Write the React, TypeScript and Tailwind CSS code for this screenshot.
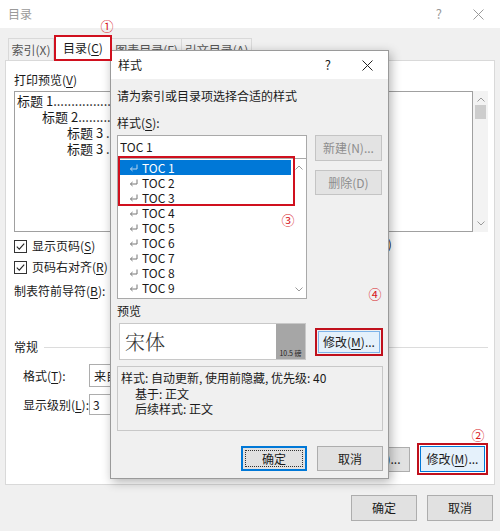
import React from "react";

function Check() {
  return (
    <span className="flex h-[13px] w-[13px] shrink-0 items-center justify-center border border-[#333] bg-white">
      <svg width="11" height="11" viewBox="0 0 11 11">
        <path d="M1.8 5.6 L4.3 8.1 L9.2 2.6" fill="none" stroke="#222" strokeWidth="1.1" />
      </svg>
    </span>
  );
}

function CloseIcon({ color }: { color: string }) {
  return (
    <svg width="11" height="11" viewBox="0 0 11 11">
      <path d="M0.5 0.5 L10.5 10.5 M10.5 0.5 L0.5 10.5" stroke={color} strokeWidth="1" />
    </svg>
  );
}

function Chevron({ up }: { up?: boolean }) {
  return (
    <svg width="8" height="5" viewBox="0 0 8 5">
      <path
        d={up ? "M0.5 4.5 L4 1 L7.5 4.5" : "M0.5 0.5 L4 4 L7.5 0.5"}
        fill="none"
        stroke="#9a9a9a"
        strokeWidth="1"
      />
    </svg>
  );
}

function ReturnMark({ color }: { color: string }) {
  return (
    <svg width="9" height="8" viewBox="0 0 9 8">
      <path d="M8 0.5 V5 H1.5" fill="none" stroke={color} strokeWidth="1" />
      <path d="M3.6 3 L1.4 5 L3.6 7" fill="none" stroke={color} strokeWidth="1" />
    </svg>
  );
}

function U({ k }: { k: string }) {
  return <span className="underline underline-offset-2">{k}</span>;
}

function Mark({ n, className }: { n: string; className: string }) {
  return (
    <span
      className={`absolute flex h-[14px] w-[14px] items-center justify-center text-[13px] leading-[14px] text-[#d7191f] ${className}`}
    >
      {n}
    </span>
  );
}

const tocItems = ["TOC 1", "TOC 2", "TOC 3", "TOC 4", "TOC 5", "TOC 6", "TOC 7", "TOC 8", "TOC 9"];

function StyleDialog() {
  return (
    <div className="absolute left-[110px] top-[50px] flex h-[429px] w-[279px] flex-col border border-[#9a9a9a] bg-[#f0f0f0] shadow-[2px_3px_10px_rgba(0,0,0,0.3)]">
      <div className="flex h-[28px] shrink-0 items-center bg-white pl-[7px] pr-[15px]">
        <span>样式</span>
        <span className="ml-auto mr-[31px] text-[13px]">?</span>
        <CloseIcon color="#222" />
      </div>

      <div className="relative flex flex-1 flex-col pl-[6px] pr-[5px] pt-[9px]">
        <div>请为索引或目录项选择合适的样式</div>
        <div className="mt-[11px]">
          样式(<U k="S" />):
        </div>

        <div className="mt-[4px] flex gap-[8px]">
          <div className="w-[190px]">
            <div className="flex h-[24px] items-center border border-[#a9a9a9] bg-white pl-[2px]">TOC 1</div>
            <div className="relative flex h-[140px] border border-t-0 border-[#a9a9a9] bg-white">
              <div className="flex-1 pl-[1px] pt-[1px]">
                {tocItems.map((t, i) => (
                  <div
                    key={t}
                    className={`flex h-[15px] items-center gap-[4px] pl-[10px] ${
                      i === 0 ? "bg-[#0078d7] text-white" : ""
                    }`}
                  >
                    <ReturnMark color={i === 0 ? "#b8d4ee" : "#777"} />
                    <span className="leading-[15px]">{t}</span>
                  </div>
                ))}
              </div>
              <div className="flex w-[15px] flex-col items-center justify-between py-[6px]">
                <Chevron up />
                <Chevron />
              </div>
              <div className="absolute left-0 top-[-3px] h-[50px] w-[177px] border-2 border-[#d0101e]" />
              <Mark n="③" className="left-[163px] top-[54px]" />
            </div>
          </div>
          <div className="flex w-[67px] flex-col">
            <div className="flex h-[26px] items-center justify-center border border-[#c4c4c4] bg-[#e3e3e3] text-[#8d8d8d]">
              新建(N)...
            </div>
            <div className="mt-[9px] flex h-[25px] items-center justify-center border border-[#c4c4c4] bg-[#e3e3e3] text-[#8d8d8d]">
              删除(D)
            </div>
          </div>
        </div>

        <div className="mt-[4px]">预览</div>
        <div className="mt-[4px] flex items-center">
          <div className="ml-[2px] flex h-[37px] w-[187px] border border-[#c8c8c8] bg-white">
            <div className="flex flex-1 items-center pl-[5px] font-['Noto_Serif_CJK_SC','Noto_Sans_CJK_SC',serif] text-[20px] font-light text-[#333]">
              宋体
            </div>
            <div className="flex w-[29px] items-end justify-center bg-[#a6a6a6] pb-[1px] text-[7px] leading-[9px] text-[#222]">
              10.5 磅
            </div>
          </div>
          <div className="ml-auto flex h-[28px] w-[68px] border-2 border-[#c0101c] p-px">
            <div className="flex flex-1 items-center justify-center border border-[#7eb4ea] bg-[#e5f1fb]">
              修改(<U k="M" />)...
            </div>
          </div>
        </div>

        <div className="mt-[6px] h-[65px] border border-[#c8c8c8] pl-[3px] pt-[3px] leading-[15.5px]">
          <div>样式: 自动更新, 使用前隐藏, 优先级: 40</div>
          <div className="pl-[14px]">基于: 正文</div>
          <div className="pl-[14px]">后续样式: 正文</div>
        </div>

        <div className="mt-[15px] flex justify-end gap-[10px]">
          <div className="relative flex h-[25px] w-[66px] items-center justify-center border-2 border-[#0078d7] bg-[#e1e1e1]">
            确定
            <span className="absolute inset-[2px] border border-dotted border-[#333]" />
          </div>
          <div className="flex h-[25px] w-[66px] items-center justify-center border border-[#adadad] bg-[#e1e1e1]">
            取消
          </div>
        </div>

        <Mark n="④" className="left-[257px] top-[208px]" />
      </div>
    </div>
  );
}

export default function App() {
  return (
    <div className="relative h-[531px] w-[500px] overflow-hidden bg-[#f0f0f0] font-['Noto_Sans_CJK_SC','Noto_Sans',sans-serif] text-[12px] leading-[16px] text-[#1a1a1a]">
      {/* title bar */}
      <div className="flex h-[28px] items-center bg-white pl-[8px] pr-[16px]">
        <span className="text-[#9a9a9a]">目录</span>
        <span className="ml-auto mr-[31px] text-[13px] text-[#9a9a9a]">?</span>
        <CloseIcon color="#9a9a9a" />
      </div>

      {/* tabs */}
      <div className="flex h-[32px] items-end pl-[8px]">
        <div className="flex h-[22px] w-[46px] items-center justify-center border border-b-0 border-[#d9d9d9] text-[#555]">
          索引(X)
        </div>
        <div className="relative z-10 -mb-px flex h-[26px] w-[58px] items-center justify-center border-2 border-[#d0101e] bg-white">
          目录(<U k="C" />)
        </div>
        <div className="flex h-[22px] w-[70px] items-center justify-center border border-b-0 border-l-0 border-[#d9d9d9] text-[#555]">
          图表目录(F)
        </div>
        <div className="flex h-[22px] w-[70px] items-center justify-center border border-b-0 border-l-0 border-[#d9d9d9] text-[#555]">
          引文目录(A)
        </div>
      </div>

      {/* tab panel */}
      <div className="mx-[5px] flex h-[425px] flex-col border border-[#d9d9d9] bg-white pl-[8px] pr-[6px] pt-[11px] pb-[9px]">
        <div className="flex gap-[6px]">
          <div className="w-[220px]">
            <div>
              打印预览(<U k="V" />)
            </div>
            <div className="mt-[3px] h-[141px] overflow-hidden whitespace-nowrap border border-[#a0a0a0] pl-[2px] pt-[1px] text-[13px] leading-[16px]">
              <div>标题 1..................................</div>
              <div className="pl-[25px]">标题 2..............................</div>
              <div className="pl-[50px]">标题 3 .........................</div>
              <div className="pl-[50px]">标题 3 .........................</div>
            </div>
            <div className="mt-[6px] flex h-[16px] items-center gap-[5px]">
              <Check />
              <span>
                显示页码(<U k="S" />)
              </span>
            </div>
            <div className="mt-[5px] flex h-[16px] items-center gap-[5px]">
              <Check />
              <span>
                页码右对齐(<U k="R" />)
              </span>
            </div>
            <div className="mt-[4px] flex h-[24px] items-center">
              <span>
                制表符前导符(<U k="B" />):
              </span>
              <div className="ml-auto flex h-[24px] w-[112px] items-center border border-[#adadad] bg-[#e1e1e1] pl-[4px]">
                .......
              </div>
            </div>
          </div>

          <div className="flex-1">
            <div>
              Web 预览(<U k="W" />)
            </div>
            <div className="mt-[3px] flex h-[141px]">
              <div className="flex-1 border border-[#a0a0a0]" />
              <div className="flex w-[15px] flex-col items-center bg-[#f3f3f3] pt-[6px] pb-[6px]">
                <Chevron up />
                <div className="mt-[3px] h-[14px] w-[11px] bg-[#cdcdcd]" />
                <div className="mt-auto">
                  <Chevron />
                </div>
              </div>
            </div>
            <div className="-ml-[15px] mt-[4px] flex h-[16px] items-center gap-[5px]">
              <Check />
              <span>使用超链接而不使用页码(H)</span>
            </div>
          </div>
        </div>

        <div className="mt-[36px] flex items-center">
          <span>常规</span>
          <div className="ml-[6px] h-px flex-1 bg-[#dcdcdc]" />
        </div>
        <div className="mt-[9px] flex h-[23px] items-center pl-[9px]">
          <span className="w-[66px]">
            格式(<U k="T" />):
          </span>
          <div className="flex h-[23px] w-[120px] items-center border border-[#adadad] bg-white pl-[4px]">
            来自模板
          </div>
        </div>
        <div className="mt-[7px] flex h-[21px] items-center pl-[9px]">
          <span className="w-[66px]">
            显示级别(<U k="L" />):
          </span>
          <div className="flex h-[21px] w-[50px] items-center border border-[#adadad] bg-white pl-[3px]">3</div>
        </div>

        <div className="mt-auto flex items-center justify-end gap-[7px]">
          <div className="flex h-[25px] w-[70px] items-center justify-center border border-[#adadad] bg-[#e1e1e1]">
            选项(O)...
          </div>
          <div className="flex h-[32px] w-[71px] border-2 border-[#c0101c] p-px">
            <div className="flex flex-1 items-center justify-center border border-[#0078d7] bg-[#e5f1fb]">
              修改(<U k="M" />)...
            </div>
          </div>
        </div>
      </div>

      {/* bottom buttons */}
      <div className="mt-[10px] flex justify-end gap-[10px] pr-[7px]">
        <div className="flex h-[26px] w-[66px] items-center justify-center border border-[#adadad] bg-[#e1e1e1]">
          确定
        </div>
        <div className="flex h-[26px] w-[66px] items-center justify-center border border-[#adadad] bg-[#e1e1e1]">
          取消
        </div>
      </div>

      <Mark n="①" className="left-[100px] top-[19px]" />
      <Mark n="②" className="left-[471px] top-[428px]" />

      <StyleDialog />
    </div>
  );
}
